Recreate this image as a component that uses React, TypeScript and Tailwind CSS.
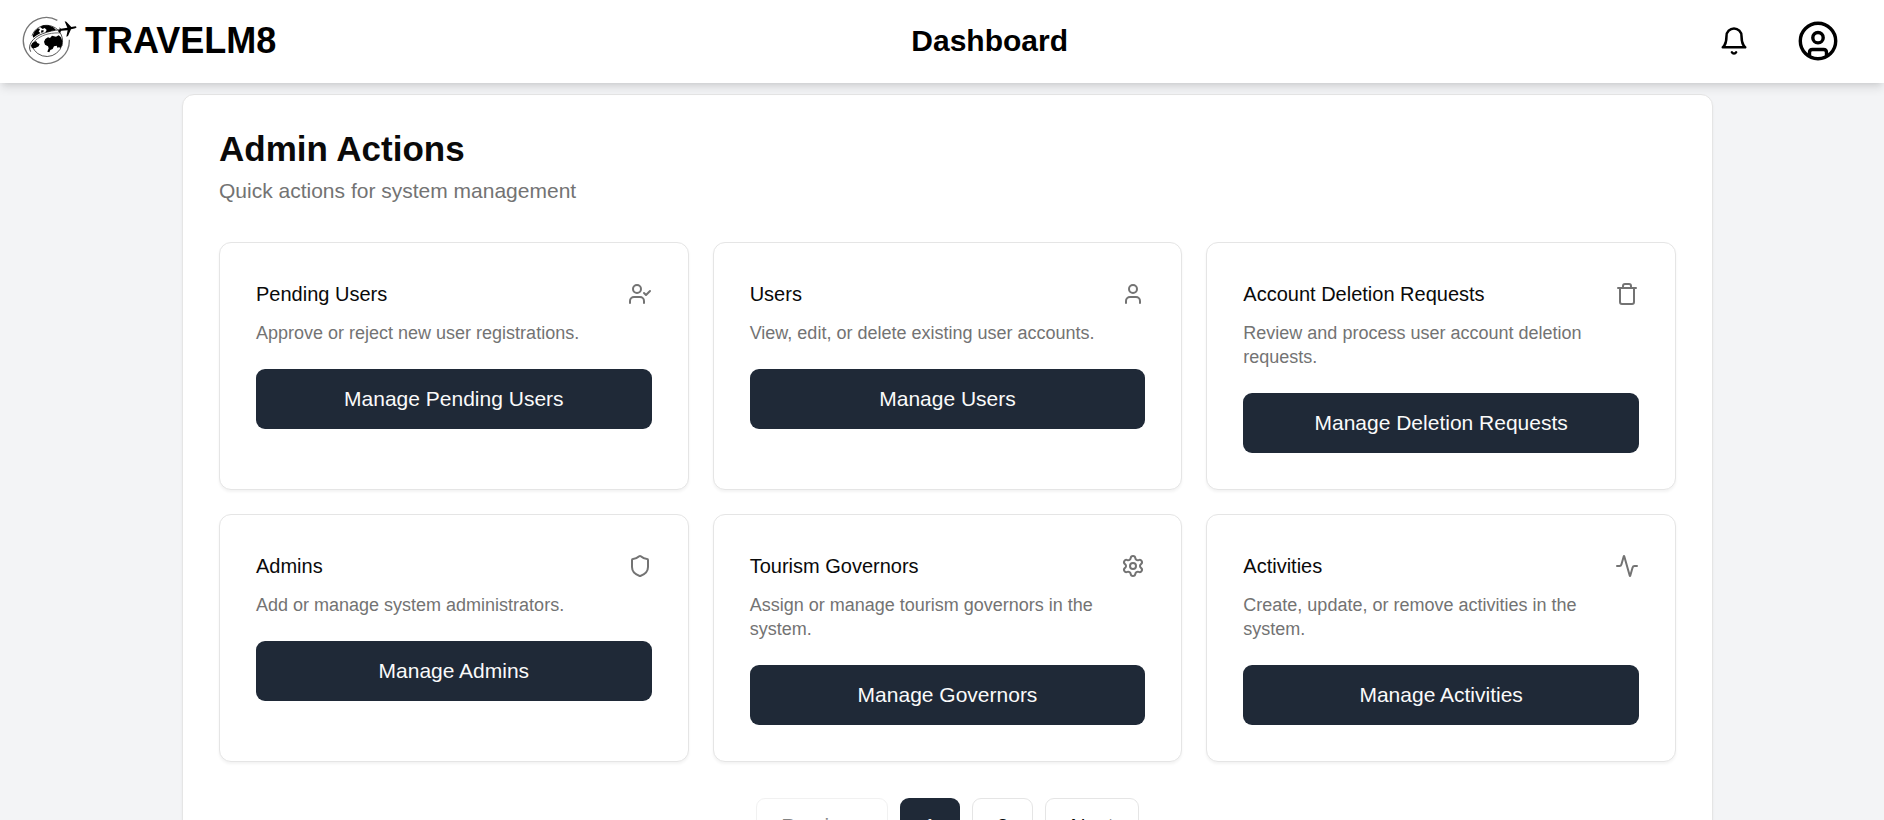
import { Shield, Settings, Activity, Trash, User } from "lucide-react";
import type { ReactNode } from "react";

function Logo() {
  return (
    <svg viewBox="36 33 165 150" className="h-[50px] w-[55px]" aria-hidden="true">
      <g fill="none">
        <path d="M142 46A69 69 0 1 0 178 104" stroke="#777" strokeWidth="4" />
        <path d="M66 122A47 47 0 0 0 156 120" stroke="#333" strokeWidth="2.5" />
        <path d="M66 92C74 70 94 60 112 61C130 62 146 72 154 90C158 100 159 110 156 122" stroke="#333" strokeWidth="2.5" />
        <path d="M62 140C52 122 66 98 98 86C116 79 132 76 150 74" stroke="#444" strokeWidth="3" />
        <path d="M64 124C70 106 92 92 114 87C128 84 142 83 152 84" stroke="#555" strokeWidth="2.5" />
      </g>
      <g fill="#000">
        <path d="M68 92L74 79L84 70L90 72L86 80L92 84L80 91L70 98Z" />
        <path d="M90 66L100 61L116 61L130 67L138 75L126 77L114 81L106 82L110 75L104 69L98 72Z" />
        <path d="M94 76L101 76L100 82L93 83Z" />
        <path d="M67 114L78 108L82 114L89 117L86 124L76 129L66 130L63 122Z" />
        <path d="M106 102L114 97L120 99L126 92L138 95L146 91L153 97L157 108L156 120L151 130L147 126L143 129L140 122L132 124L128 132L121 135L118 142L112 140L116 130L114 124L105 119L102 110Z" />
        <path d="M144 78L150 73L147 67L153 71L172 68L164 49L169 50L184 66L197 64L200 67L196 70L183 73L174 93L169 95L173 76L154 77L149 84Z" />
      </g>
    </svg>
  );
}

function BellIcon() {
  return (
    <svg viewBox="0 0 24 24" className="size-[30px]" fill="none" stroke="currentColor" strokeWidth="2" strokeLinecap="round" strokeLinejoin="round">
      <path d="M6 8a6 6 0 0 1 12 0c0 7 3 9 3 9H3s3-2 3-9" />
      <path d="M10.3 21a1.94 1.94 0 0 0 3.4 0" />
    </svg>
  );
}

function UserCheckIcon() {
  return (
    <svg viewBox="0 0 24 24" className="size-6" fill="none" stroke="currentColor" strokeWidth="2" strokeLinecap="round" strokeLinejoin="round">
      <path d="M16 21v-2a4 4 0 0 0-4-4H6a4 4 0 0 0-4 4v2" />
      <circle cx="9" cy="7" r="4" />
      <path d="m16 11 2 2 4-4" />
    </svg>
  );
}

const actions: { title: string; text: string; button: string; icon: ReactNode }[] = [
  { title: "Pending Users", text: "Approve or reject new user registrations.", button: "Manage Pending Users", icon: <UserCheckIcon /> },
  { title: "Users", text: "View, edit, or delete existing user accounts.", button: "Manage Users", icon: <User className="size-6" /> },
  { title: "Account Deletion Requests", text: "Review and process user account deletion requests.", button: "Manage Deletion Requests", icon: <Trash className="size-6" /> },
  { title: "Admins", text: "Add or manage system administrators.", button: "Manage Admins", icon: <Shield className="size-6" /> },
  { title: "Tourism Governors", text: "Assign or manage tourism governors in the system.", button: "Manage Governors", icon: <Settings className="size-6" /> },
  { title: "Activities", text: "Create, update, or remove activities in the system.", button: "Manage Activities", icon: <Activity className="size-6" /> },
];

const pageButton = "h-[60px] rounded-[9px] border border-[#e5e5e5] bg-white px-6 pb-1 text-[21px]";

export default function App() {
  return (
    <div className="flex h-screen flex-col overflow-hidden bg-gray-100 font-['Liberation_Sans',Arial,sans-serif] text-[#0a0a0a]">
      <header className="z-10 flex h-[83px] shrink-0 items-center justify-between bg-white pr-[46px] pb-[2px] pl-[22px] text-black shadow-[0_6px_9px_-1px_rgba(0,0,0,0.1),0_3px_6px_-3px_rgba(0,0,0,0.1)]">
        <a href="#" className="flex items-center gap-2">
          <Logo />
          <span className="text-4xl font-bold">TRAVELM8</span>
        </a>
        <h1 className="text-3xl font-bold">Dashboard</h1>
        <div className="flex items-center gap-[33px]">
          <button type="button" aria-label="Notifications" className="p-4">
            <BellIcon />
          </button>
          <button type="button" aria-label="Account">
            <svg viewBox="0 0 40 40" className="size-10" fill="none" stroke="currentColor" strokeWidth="3.4">
              <circle cx="20" cy="20" r="17.7" />
              <circle cx="20" cy="16.7" r="5.2" />
              <path d="M11.5 35V31.5Q11.5 28.5 14.5 28.5H25.5Q28.5 28.5 28.5 31.5V35" />
            </svg>
          </button>
        </div>
      </header>
      <main className="min-h-0 flex-1 overflow-y-auto pt-[11px] pb-6 pl-[11px] [scrollbar-width:none]">
        <section className="mx-auto max-w-[1531px] rounded-xl border border-[#e5e5e5] bg-white p-9 shadow-[0_2px_3px_rgba(0,0,0,0.05)]">
          <h2 className="text-[35px] leading-9 font-bold">Admin Actions</h2>
          <p className="mt-[9px] text-[21px] leading-[30px] text-[#737373]">Quick actions for system management</p>
          <div className="mt-9 grid grid-cols-3 gap-6">
            {actions.map((a) => (
              <article key={a.title} className="rounded-xl border border-[#e5e5e5] bg-white p-9 shadow-[0_2px_3px_rgba(0,0,0,0.05)]">
                <div className="mb-3 flex items-center justify-between">
                  <h3 className="text-xl leading-[30px]">{a.title}</h3>
                  <span className="text-[#737373]">{a.icon}</span>
                </div>
                <p className="text-lg leading-6 text-[#737373]">{a.text}</p>
                <button type="button" className="mt-6 h-[60px] w-full rounded-[9px] bg-[#1f2937] text-[21px] text-neutral-50">
                  {a.button}
                </button>
              </article>
            ))}
          </div>
          <nav aria-label="Pages" className="mt-9 flex justify-center gap-3">
            <button type="button" disabled className={`${pageButton} opacity-50`}>Previous</button>
            <button type="button" aria-current="page" className="h-[60px] rounded-[9px] bg-[#1f2937] px-6 pb-1 text-[21px] text-neutral-50">1</button>
            <button type="button" className={pageButton}>2</button>
            <button type="button" className={pageButton}>Next</button>
          </nav>
        </section>
      </main>
    </div>
  );
}
